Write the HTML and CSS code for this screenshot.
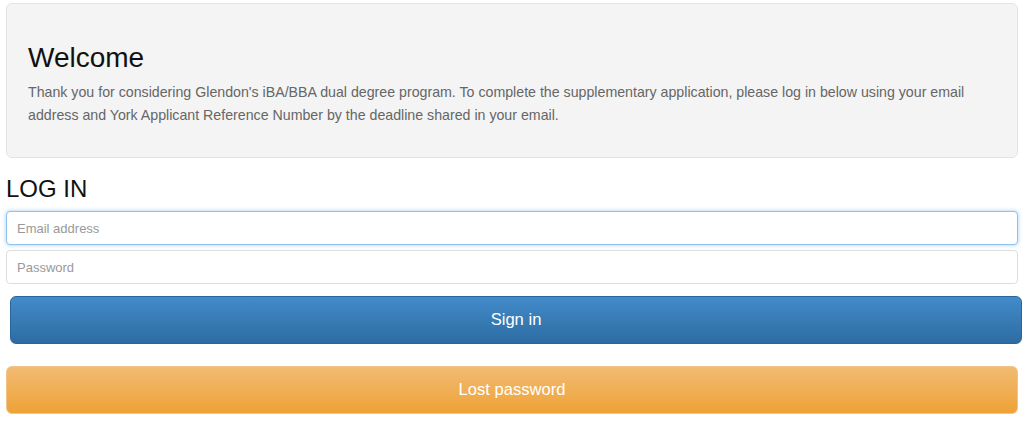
FILE: index.html
```html
<!DOCTYPE html>
<html>
<head>
<meta charset="utf-8">
<link rel="stylesheet" href="styles.css">
</head>
<body>
<div class="page">
  <div class="jumbotron">
    <h1 class="title">Welcome</h1>
    <p class="intro">Thank you for considering Glendon's iBA/BBA dual degree program. To complete the supplementary application, please log in below using your email address and York Applicant Reference Number by the deadline shared in your email.</p>
  </div>
  <h2 class="login-title">LOG IN</h2>
  <form class="login-form">
    <input class="field field-focus" type="text" placeholder="Email address">
    <input class="field" type="password" placeholder="Password">
    <button class="btn btn-primary" type="button">Sign in</button>
    <button class="btn btn-warning" type="button">Lost password</button>
  </form>
</div>
</body>
</html>
```
FILE: styles.css
```css
* { box-sizing: border-box; }
html, body { margin: 0; padding: 0; background: #fff; }
body { font-family: "Liberation Sans", Arial, sans-serif; color: #333; }
.page { padding: 3px 6px 0 6px; width: 1024px; }
.jumbotron {
  background: #f4f4f4;
  border: 1px solid #e3e3e3;
  border-radius: 6px;
  padding: 37px 21px 29px 21px;
  height: 155px;
}
.title {
  margin: 0 0 6px 0;
  font-size: 28px;
  font-weight: 400;
  color: #111;
  line-height: 34px;
}
.intro {
  margin: 0;
  font-size: 14.2px;
  line-height: 23px;
  color: #666;
}
.login-title {
  margin: 17px 0 8px 0;
  font-size: 24px;
  font-weight: 400;
  color: #111;
  line-height: 28px;
}
.login-form { display: flex; flex-direction: column; }
.field {
  display: block;
  width: 1012px;
  height: 34px;
  padding: 6px 10px;
  font-family: "Liberation Sans", Arial, sans-serif;
  font-size: 13px;
  color: #555;
  border: 1px solid #ddd;
  border-radius: 4px;
  background: #fff;
  margin: 0 0 5px 0;
  outline: none;
}
.field::placeholder { color: #999; }
.field-focus {
  border-color: #8ec2ec;
  box-shadow: 0 0 4px rgba(102, 175, 233, 0.6);
}
.btn {
  display: block;
  width: 1012px;
  height: 48px;
  font-family: "Liberation Sans", Arial, sans-serif;
  font-size: 16.6px;
  color: #fff;
  border-radius: 6px;
  cursor: pointer;
}
.btn-primary {
  margin: 7px 0 0 4px;
  background: linear-gradient(to bottom, #428bca 0%, #2d6ca2 100%);
  border: 1px solid #2b669a;
}
.btn-warning {
  margin: 22px 0 0 0;
  background: linear-gradient(to bottom, #f2bb73 0%, #eea236 100%);
  border: 1px solid #f0c48a;
}
```
